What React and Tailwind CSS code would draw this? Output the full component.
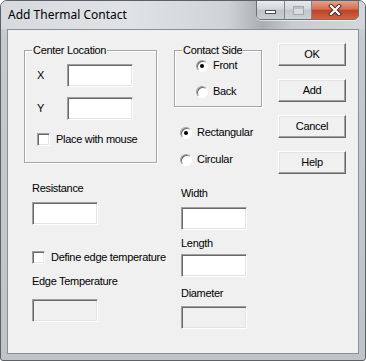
import React from 'react';

const Input = ({ disabled, className = '' }) => (
  <div
    className={`w-[66px] h-[23px] shrink-0 border border-t-[#a0a0a0] border-l-[#a0a0a0] border-b-white border-r-white shadow-[inset_1px_1px_0_#696969,inset_-1px_-1px_0_#e3e3e3] ${disabled ? 'bg-[#f0f0f0]' : 'bg-white'} ${className}`}
  />
);

const Button = ({ children, className = '' }) => (
  <div
    className={`w-[68px] h-[23px] flex items-center justify-center border border-t-white border-l-white border-b-[#696969] border-r-[#696969] shadow-[inset_-1px_-1px_0_#a0a0a0,inset_1px_1px_0_#e3e3e3] bg-[#f0f0f0] ${className}`}
  >
    {children}
  </div>
);

const Check = ({ label, className = '' }) => (
  <div className={`flex items-center h-[13px] whitespace-nowrap ${className}`}>
    <div className="w-[13px] h-[13px] shrink-0 border border-t-[#a0a0a0] border-l-[#a0a0a0] border-b-white border-r-white shadow-[inset_1px_1px_0_#696969,inset_-1px_-1px_0_#e3e3e3] bg-white" />
    <span className="ml-[6px] leading-[13px]">{label}</span>
  </div>
);

const Radio = ({ label, checked, className = '' }) => (
  <div className={`flex items-center h-[13px] whitespace-nowrap ${className}`}>
    <div className="w-[12px] h-[12px] shrink-0 rounded-full border border-t-[#a0a0a0] border-l-[#a0a0a0] border-b-white border-r-white shadow-[inset_1px_1px_0_#696969] bg-white flex items-center justify-center">
      {checked && <div className="w-[4px] h-[4px] rounded-full bg-black" />}
    </div>
    <span className="ml-[5px] leading-[13px]">{label}</span>
  </div>
);

const Group = ({ title, className = '', children }) => (
  <div className={`relative border border-[#a6a6a6] shadow-[1px_1px_0_white,inset_1px_1px_0_white] ${className}`}>
    <span className="absolute left-[7px] top-[-7px] px-[1px] bg-[#f0f0f0] leading-[13px] whitespace-nowrap">{title}</span>
    {children}
  </div>
);

export default function App() {
  return (
    <div className="w-[366px] h-[361px] flex flex-col rounded-t-[7px] rounded-b-[3px] border border-[#5d6166] bg-[linear-gradient(180deg,#d9dde2_0%,#c5cacf_10%,#bfc4c9_100%)] overflow-hidden">
      {/* title bar */}
      <div className="relative h-[28px] shrink-0 flex items-start bg-[linear-gradient(90deg,#d6dade_0%,#e0e3e6_35%,#cfd3d7_62%,#a9aeb3_72%,#c9cdd1_80%,#d2d6da_100%)]">
        <span className="pl-[7px] pt-[6px] text-[12px] leading-[16px] text-black [font-family:'Noto_Sans',sans-serif]">
          Add Thermal Contact
        </span>
        <div className="absolute right-[6px] top-[-1px] flex h-[20px] rounded-b-[5px] border border-[#6c7177] overflow-hidden shadow-[0_1px_0_rgba(255,255,255,0.6)]">
          <div className="w-[28px] h-full flex items-center justify-center border-r border-[#80858a] bg-[linear-gradient(180deg,#e9ecef_0%,#d2d6da_45%,#bfc4c9_50%,#c9ced3_100%)]">
            <div className="w-[11px] h-[4px] mt-[4px] bg-white border border-[#4b4f54]" />
          </div>
          <div className="w-[27px] h-full flex items-center justify-center border-r border-[#80858a] bg-[linear-gradient(180deg,#e6e9ec_0%,#d3d7db_45%,#c2c7cc_50%,#cdd2d6_100%)]">
            <div className="w-[11px] h-[9px] border border-[#a4a8ad] shadow-[inset_0_2px_0_#bfc3c7] bg-[#d9dde1]" />
          </div>
          <div className="w-[46px] h-full flex items-center justify-center bg-[linear-gradient(180deg,#e6a08b_0%,#d46f55_45%,#bf4226_52%,#cd6446_100%)]">
            <svg width="14" height="12" viewBox="0 0 14 12">
              <path d="M3 2 L11 10 M11 2 L3 10" stroke="#3f2a25" strokeWidth="4" strokeLinecap="square" />
              <path d="M3 2 L11 10 M11 2 L3 10" stroke="#ffffff" strokeWidth="2.2" strokeLinecap="square" />
            </svg>
          </div>
        </div>
      </div>

      {/* client area */}
      <div className="flex-1 mx-[6px] mb-[6px] border border-[#8b9096] bg-[#f0f0f0] flex items-start text-[11px] tracking-[-0.3px] text-black [font-family:'Liberation_Sans',Arial,sans-serif]">
        {/* left column */}
        <div className="ml-[16px] w-[133px] shrink-0 flex flex-col">
          <Group title="Center Location" className="mt-[20px] h-[113px]">
            <div className="flex items-center mt-[13px] pl-[12px]">
              <span className="w-[30px]">X</span>
              <Input />
            </div>
            <div className="flex items-center mt-[10px] pl-[12px]">
              <span className="w-[30px]">Y</span>
              <Input />
            </div>
            <Check label="Place with mouse" className="mt-[13px] ml-[12px]" />
          </Group>
          <div className="pl-[8px] flex flex-col">
            <span className="mt-[19px] leading-[13px]">Resistance</span>
            <Input className="mt-[7px]" />
            <Check label="Define edge temperature" className="mt-[26px]" />
            <span className="mt-[11px] leading-[13px] whitespace-nowrap">Edge Temperature</span>
            <Input disabled className="mt-[11px]" />
          </div>
        </div>

        {/* middle column */}
        <div className="ml-[17px] w-[88px] shrink-0 flex flex-col">
          <Group title="Contact Side" className="mt-[20px] h-[57px]">
            <Radio label="Front" checked className="mt-[8px] ml-[21px]" />
            <Radio label="Back" className="mt-[13px] ml-[21px]" />
          </Group>
          <div className="pl-[6px] flex flex-col">
            <Radio label="Rectangular" checked className="mt-[19px]" />
            <Radio label="Circular" className="mt-[14px]" />
          </div>
          <div className="pl-[7px] flex flex-col">
            <span className="mt-[21px] leading-[13px]">Width</span>
            <Input className="mt-[7px]" />
            <span className="mt-[7px] leading-[13px]">Length</span>
            <Input className="mt-[4px]" />
            <span className="mt-[10px] leading-[13px]">Diameter</span>
            <Input disabled className="mt-[6px]" />
          </div>
        </div>

        {/* buttons */}
        <div className="ml-[16px] flex flex-col gap-[13px] mt-[13px]">
          <Button>OK</Button>
          <Button>Add</Button>
          <Button>Cancel</Button>
          <Button>Help</Button>
        </div>
      </div>
    </div>
  );
}
